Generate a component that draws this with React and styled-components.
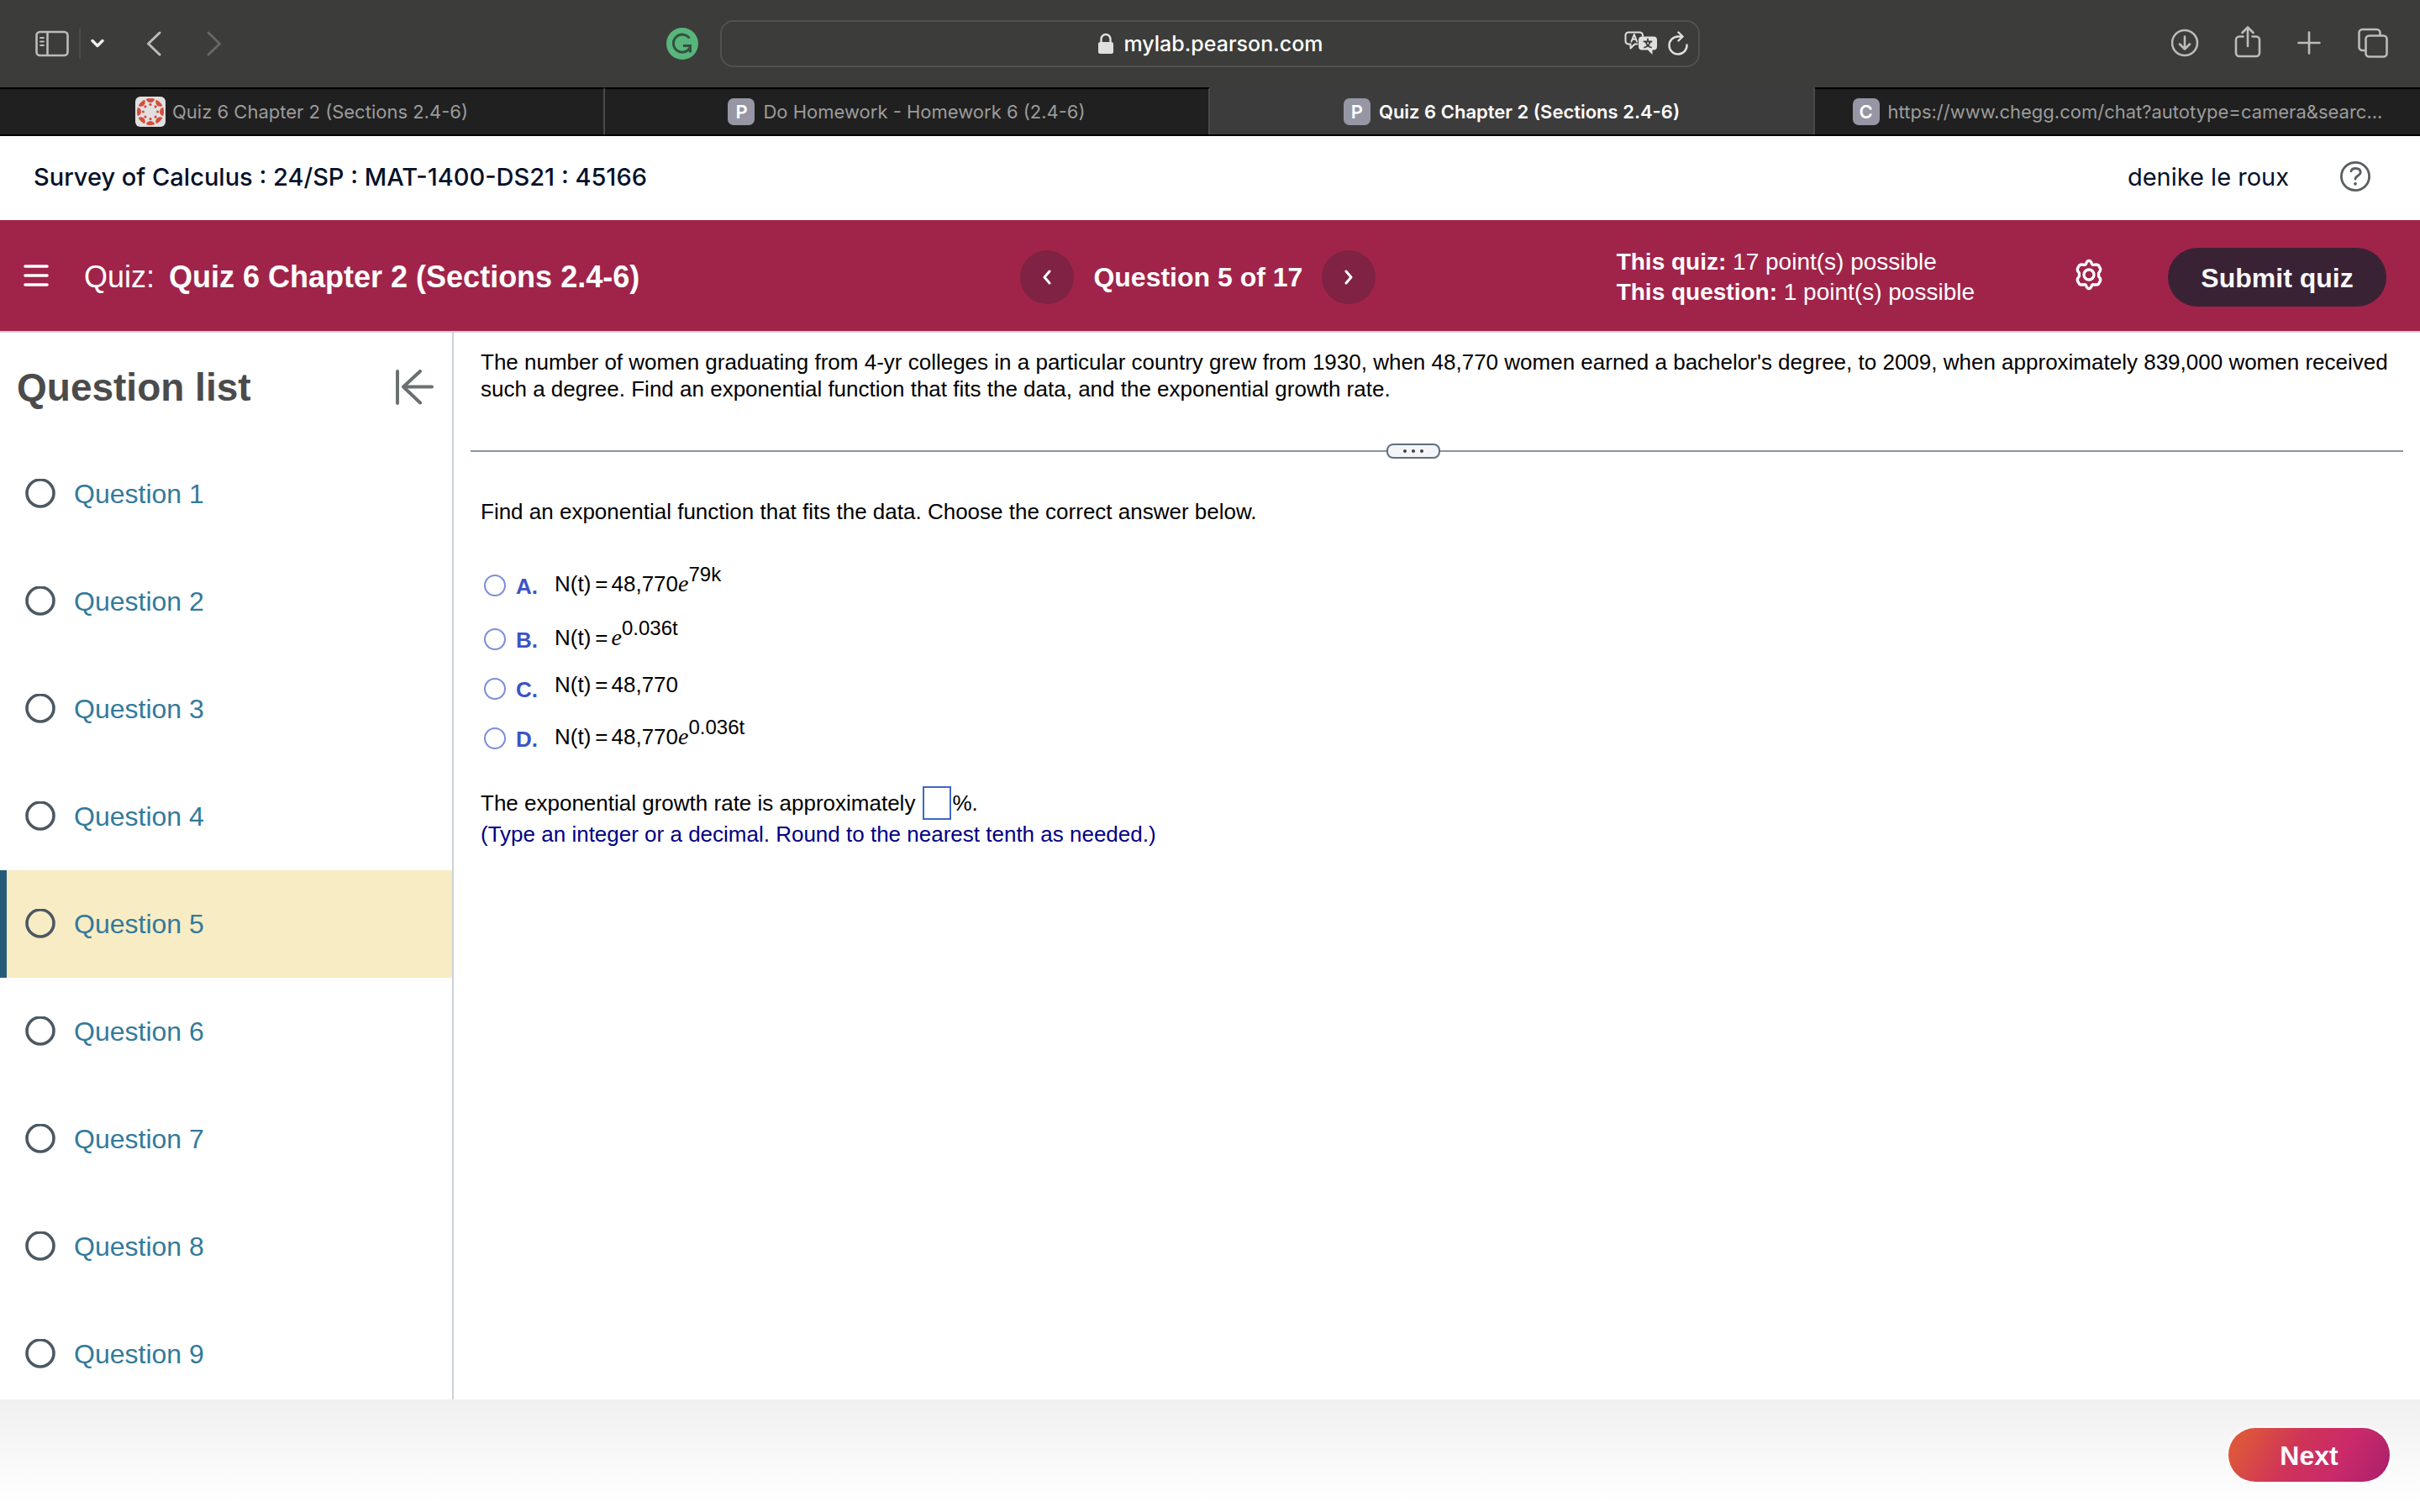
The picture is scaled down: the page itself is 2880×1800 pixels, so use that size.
import React, { useState } from 'react';
import styled, { createGlobalStyle } from 'styled-components';

const GlobalStyle = createGlobalStyle`
* {
    box-sizing: border-box;
}

body {
    margin: 0;
    background-color: #ffffff;
    font-family: "Liberation Sans", Arial, sans-serif;
    color: #000000;
}

button, input {
    font-family: inherit;
    margin: 0;
}
`;

const Page = styled.div`
display: flex;
flex-direction: column;
height: 100vh;
overflow: hidden;
`;

/* browser chrome */

const Toolbar = styled.div`
display: grid;
grid-template-columns: minmax(0, 1fr) minmax(0, 1166px) minmax(0, 1fr);
align-items: center;
flex-shrink: 0;
height: 104px;
background-color: #3c3c3a;
`;

const ToolbarLeft = styled.div`
display: flex;
align-items: center;
padding: 0 26px 0 42px;

.divider {
    width: 2px;
    height: 36px;
    margin: 0 12px;
    background-color: #4c4c4a;
}
.back {
    margin-left: 50px;
}
.forward {
    margin-left: 54px;
}
.grammarly {
    margin-left: auto;
}
`;

const ToolbarRight = styled.div`
display: flex;
align-items: center;
justify-content: flex-end;
gap: 40px;
padding-right: 36px;
`;

const IconButton = styled.button`
display: flex;
align-items: center;
justify-content: center;
padding: 0;
border: none;
background: none;
color: ${props => props.$color || '#bcbcba'};
cursor: pointer;

svg {
    display: block;
}
`;

const AddressBar = styled.div`
display: grid;
grid-template-columns: 1fr auto 1fr;
align-items: center;
height: 56px;
padding: 0 12px;
border: 2px solid #525250;
border-radius: 16px;
color: #ffffff;
font-family: Inter, sans-serif;
font-size: 25px;
font-weight: 500;

.address {
    display: flex;
    align-items: center;
    gap: 12px;
    grid-column: 2;
}
.actions {
    display: flex;
    align-items: center;
    justify-content: flex-end;
    gap: 12px;
}
`;

const TabBar = styled.div`
display: grid;
grid-template-columns: repeat(4, minmax(0, 1fr));
flex-shrink: 0;
height: 58px;
border-bottom: 2px solid #000000;
background-color: #202020;
`;

const Tab = styled.button`
display: flex;
align-items: center;
justify-content: center;
gap: ${props => props.$tight ? 8 : 10}px;
padding: 0 52px;
border: none;
border-top: 2px solid ${props => props.$active ? '#3c3c3c' : '#000000'};
border-right: 2px solid #4a4a4a;
background-color: ${props => props.$active ? '#3c3c3c' : '#202020'};
color: ${props => props.$active ? '#ffffff' : '#9c9c9c'};
font-family: Inter, sans-serif;
font-size: 22px;
font-weight: ${props => props.$active ? 600 : 400};
white-space: nowrap;

&:last-child {
    border-right: none;
}
`;

const Favicon = styled.span`
display: flex;
align-items: center;
justify-content: center;
flex-shrink: 0;
width: 32px;
height: 32px;
border-radius: 7px;
background-color: #9696a4;
color: #ffffff;
font-size: 22px;
font-weight: 600;
`;

/* course header */

const CourseHeader = styled.header`
display: flex;
align-items: center;
justify-content: space-between;
flex-shrink: 0;
height: 100px;
padding: 0 58px 4px 40px;
color: #05112a;
font-family: Inter, sans-serif;
font-size: 29px;

.course {
    margin: 0;
    font-size: 29px;
    font-weight: 500;
}
.user {
    display: flex;
    align-items: center;
    gap: 60px;
}
`;

const QuizBar = styled.div`
display: grid;
grid-template-columns: minmax(0, 43fr) auto minmax(0, 44fr);
align-items: center;
flex-shrink: 0;
height: 134px;
padding-top: 4px;
border-bottom: 2px solid #cbd0db;
background-color: #a0244a;
color: #ffffff;
`;

const QuizTitle = styled.div`
display: flex;
align-items: center;
padding: 0 28px;
font-size: 36px;
white-space: nowrap;

.name {
    margin: 0 0 0 17px;
    font-size: 36px;
    font-weight: bold;
}
.menu {
    margin: 0 42px 4px 0;
}
`;

const QuestionNav = styled.nav`
display: flex;
align-items: center;
gap: 23px;
font-size: 32px;
font-weight: bold;
white-space: nowrap;
`;

const RoundButton = styled.button`
display: flex;
align-items: center;
justify-content: center;
width: 64px;
height: 64px;
padding: 0;
border: none;
border-radius: 50%;
background-color: #7f2243;
color: #ffffff;
`;

const QuizInfo = styled.div`
display: flex;
align-items: center;
justify-content: flex-end;
padding-right: 40px;

.points {
    margin: 0;
    font-size: 28px;
    line-height: 36px;
    white-space: nowrap;
}
.settings {
    margin: 0 75px 6px 117px;
}
`;

const PillButton = styled.button`
height: ${props => props.$primary ? 64 : 70}px;
width: ${props => props.$primary ? 192 : 260}px;
padding: 2px 0 0;
border: none;
border-radius: 35px;
background: ${props => props.$primary
        ? 'linear-gradient(120deg, #dd563c 10%, #cf3359 42%, #ca2a6a 68%, #a91f6c 100%)'
        : '#3a2235'};
box-shadow: ${props => props.$primary ? '0 0 4px 2px rgba(255, 255, 255, 0.6)' : 'none'};
color: #f9f9ff;
font-size: 32px;
font-weight: bold;
`;

/* question list and question */

const Content = styled.div`
display: flex;
flex: 1;
min-height: 0;
`;

const Sidebar = styled.aside`
flex: 0 0 540px;
overflow: hidden;
border-right: 2px solid #cbd1da;
`;

const SidebarHeader = styled.div`
display: flex;
align-items: center;
justify-content: space-between;
height: 128px;
padding: 2px 20px 0;

h2 {
    margin: 0;
    color: #4b4b4b;
    font-size: 46px;
    font-weight: bold;
}
`;

const QuestionList = styled.ul`
margin: 0;
padding: 0;
list-style: none;
`;

const QuestionItem = styled.li`
height: 128px;
border-left: 8px solid ${props => props.$active ? '#265c7a' : 'transparent'};
background-color: ${props => props.$active ? '#f8ecc4' : 'transparent'};

a {
    display: flex;
    align-items: center;
    gap: 22px;
    height: 100%;
    padding-left: 22px;
    color: #337a9b;
    font-size: 32px;
    text-decoration: none;
}
`;

const Main = styled.main`
flex: 1;
min-width: 0;
padding: 19px 20px 0;
font-size: 26px;
line-height: 32px;

p {
    margin: 0;
    padding-left: 12px;
}
`;

const Divider = styled.div`
display: flex;
align-items: center;
height: 18px;
margin: 49px 0 47px;

.line {
    height: 2px;
    background-color: #8a94a5;
}
.start {
    flex: 1090;
}
.end {
    flex: 1146;
}
`;

const DividerHandle = styled.button`
display: flex;
align-items: center;
justify-content: center;
width: 64px;
height: 18px;
padding: 0;
border: 2px solid #5f6f80;
border-radius: 8px;
background-color: #f3f5f8;
color: #3a4450;
`;

const Choices = styled.fieldset`
display: flex;
flex-direction: column;
margin: 40px 0 0;
padding: 0 0 0 16px;
border: none;
`;

const Choice = styled.label`
display: flex;
align-items: center;
height: ${props => props.$plain ? 54 : 64}px;

input {
    appearance: none;
    width: 26px;
    height: 26px;
    border: 2px solid #7c8ddd;
    border-radius: 50%;
}
input:checked {
    background-color: #3c53c8;
}
.letter {
    width: 46px;
    margin-left: 12px;
    padding-top: 2px;
    color: #3c53c8;
    font-weight: bold;
}
.formula {
    padding-bottom: ${props => props.$plain ? 10 : 4}px;
    white-space: nowrap;
}
.equals {
    margin: 0 4px 0 5px;
}
.formula i {
    font-family: "Liberation Serif", serif;
    font-size: 28px;
    line-height: 0;
}
.formula sup {
    font-size: 24px;
    line-height: 0;
    vertical-align: 12px;
}
`;

const GrowthRate = styled.div`
display: flex;
align-items: center;
gap: 1px;
margin-top: 25px;
padding-left: 12px;

input {
    width: 34px;
    height: 40px;
    margin-left: 8px;
    padding: 0 4px;
    border: 2px solid #3f68c4;
    background-color: #ffffff;
    font-size: 24px;
}
`;

const Hint = styled.p`
padding-top: 1px;
color: #000084;
`;

const Footer = styled.footer`
display: flex;
justify-content: flex-end;
flex-shrink: 0;
height: 134px;
padding: 34px 36px 0;
background: linear-gradient(#f0f0f0, #ffffff 94%);
`;

const SidebarIcon = () => (
    <svg width="40" height="32" viewBox="0 0 40 32" fill="none" stroke="currentColor" strokeWidth="2.6">
        <rect x="1.5" y="2" width="37" height="28" rx="4" />
        <path d="M14.5 2v28" />
        <path d="M6 9h4M6 13.5h4M6 18h4" strokeWidth="1.8" strokeLinecap="round" />
    </svg>
);

const GrammarlyIcon = () => (
    <svg width="38" height="38" viewBox="0 0 38 38" fill="none">
        <circle cx="19" cy="19" r="19" fill="#58b57c" />
        <path d="M27.5 12.5A10.5 10.5 0 1 0 28.5 23" stroke="#34513f" strokeWidth="3" />
        <path d="M20 21.5h8.5v8" stroke="#34513f" strokeWidth="3" />
    </svg>
);

const LockIcon = () => (
    <svg width="20" height="26" viewBox="0 0 20 26" fill="none">
        <path d="M4.5 12V7.5a5.5 5.5 0 0 1 11 0V12" stroke="#e0e0de" strokeWidth="2.4" />
        <rect x="1" y="11" width="18" height="14" rx="2.5" fill="#e0e0de" />
    </svg>
);

const TranslateIcon = () => (
    <svg width="40" height="30" viewBox="0 0 40 30" fill="none" stroke="#e0e0de" strokeWidth="2" strokeLinecap="round" strokeLinejoin="round">
        <path d="M15.5 15.5h-3L7.500 20.500v-5H5a3.500 3.500 0 0 1-3.500-3.500V5A3.500 3.500 0 0 1 5 1.500h13.500A3.500 3.500 0 0 1 22 5v1" />
        <path d="M8.500 12.500l3.300-8.500 3.300 8.500M9.500 9.700h4.600" />
        <path d="M21 6.500h14a4 4 0 0 1 4 4v8a4 4 0 0 1-4 4h-1.500v5.500l-5.500-5.500h-7a4 4 0 0 1-4-4v-8a4 4 0 0 1 4-4z" fill="#e0e0de" stroke="none" />
        <path d="M28 9.500v2.500M23.500 12.500h9M31 12.500c-1 3.500-3.500 6-7 7M25.500 12.500c1 3.500 3 6 6.500 7" stroke="#3c3c3a" strokeWidth="1.800" />
    </svg>
);

const ReloadIcon = () => (
    <svg width="24" height="30" viewBox="0 0 24 30" fill="none" stroke="#e0e0de" strokeWidth="2.4" strokeLinecap="round" strokeLinejoin="round">
        <path d="M22.500 16.500A10.500 10.500 0 1 1 12 6.500h5" />
        <path d="M12.500 1.500l5 5-5 5" />
    </svg>
);

const DownloadIcon = () => (
    <svg width="34" height="38" viewBox="0 0 34 38" fill="none" stroke="currentColor" strokeWidth="2.6" strokeLinecap="round" strokeLinejoin="round">
        <circle cx="16" cy="18" r="15" />
        <path d="M16 10.5v15M10 19.5l6 6 6-6" />
    </svg>
);

const ShareIcon = () => (
    <svg width="34" height="42" viewBox="0 0 34 42" fill="none" stroke="currentColor" strokeWidth="2.6" strokeLinecap="round" strokeLinejoin="round">
        <path d="M11.500 12.500H7a4 4 0 0 0-4 4V32a4 4 0 0 0 4 4h20a4 4 0 0 0 4-4V16.500a4 4 0 0 0-4-4h-4.500" />
        <path d="M17 24V2.500M10.500 8L17 1.500 23.500 8" />
    </svg>
);

const PlusIcon = () => (
    <svg width="34" height="34" viewBox="0 0 34 34" stroke="currentColor" strokeWidth="2.6" strokeLinecap="round">
        <path d="M16 3.500v25M3.500 16h25" />
    </svg>
);

const TabsIcon = () => (
    <svg width="38" height="38" viewBox="0 0 38 38" fill="none" stroke="currentColor" strokeWidth="2.6">
        <rect x="9.5" y="9.5" width="25" height="25" rx="4" />
        <path d="M9.500 27H5.500a4 4 0 0 1-4-4V6a4 4 0 0 1 4-4h17a4 4 0 0 1 4 4v3.500" />
    </svg>
);

const Chevron = ({ d, width, height, stroke }) => (
    <svg width={width} height={height} viewBox={`0 0 ${width} ${height}`} fill="none" stroke="currentColor" strokeWidth={stroke} strokeLinecap="round" strokeLinejoin="round">
        <path d={d} />
    </svg>
);

const CanvasIcon = () => {
    const angles = [0, 45, 90, 135, 180, 225, 270, 315];
    return (
        <svg width="36" height="36" viewBox="0 0 36 36" fill="#d54d3b">
            <defs>
                <clipPath id="canvas-ring"><circle cx="18" cy="18" r="16" /></clipPath>
            </defs>
            <rect width="36" height="36" rx="6" fill="#e0e0e0" />
            <g clipPath="url(#canvas-ring)">
                {angles.map(angle => (
                    <circle key={angle} cx="18" cy="1.8" r="5.2" transform={`rotate(${angle} 18 18)`} />
                ))}
            </g>
            {angles.map(angle => (
                <circle key={angle} cx="18" cy="9.4" r="1.6" transform={`rotate(${angle} 18 18)`} />
            ))}
        </svg>
    );
};

const HelpIcon = () => (
    <svg width="38" height="38" viewBox="0 0 38 38" fill="none" stroke="#5a5f60" strokeWidth="2.8" strokeLinecap="round" strokeLinejoin="round">
        <circle cx="19" cy="19" r="16.6" />
        <path d="M14 12.800c.6-2.300 2.400-3.300 5.200-3.300 3.600 0 6 1.700 6 4.600 0 4.400-6.200 3.800-6.200 8.100" />
        <circle cx="19" cy="27.8" r="1.2" fill="#5a5f60" strokeWidth="1.4" />
    </svg>
);

const MenuIcon = () => (
    <svg width="30" height="30" viewBox="0 0 30 30" stroke="#ffffff" strokeWidth="3.6" strokeLinecap="round">
        <path d="M2 4h26M2 15h26M2 26h26" />
    </svg>
);

const GearIcon = () => (
    <svg width="38" height="38" viewBox="0 0 24 24" fill="none" stroke="#ffffff" strokeWidth="2.1" strokeLinejoin="round">
        <path d="M9.700 4.200C10.200 2.400 10.800 1.500 12 1.500s1.800.9 2.300 2.700l1 .5c1.900-.5 3-.4 3.900.3l1.300 2.200c.5 1.200.1 2.200-1.200 3.600v2.400c1.300 1.400 1.700 2.400 1.200 3.600L19.200 19c-.9.700-2 .8-3.900.3l-1 .5c-.5 1.800-1.100 2.700-2.300 2.700s-1.800-.9-2.300-2.700l-1-.5c-1.900.5-3 .4-3.900-.3l-1.300-2.200c-.5-1.200-.1-2.200 1.200-3.600v-2.400C3.400 9.400 3 8.400 3.500 7.200L4.800 5c.9-.7 2-.8 3.900-.3z" />
        <circle cx="12" cy="12" r="3.8" />
    </svg>
);

const CollapseIcon = () => (
    <svg width="48" height="42" viewBox="0 0 48 42" fill="none" stroke="#6a7070" strokeWidth="4" strokeLinecap="round" strokeLinejoin="round">
        <path d="M3 2v38M44 20.500H11M30 2L10 20.500l20 19" />
    </svg>
);

const StatusIcon = () => (
    <svg width="36" height="36" viewBox="0 0 36 36" fill="none" stroke="#4c5863" strokeWidth="3.6">
        <circle cx="18" cy="17" r="16" />
    </svg>
);

const DotsIcon = () => (
    <svg width="26" height="6" viewBox="0 0 26 6" fill="currentColor">
        <circle cx="3" cy="3" r="2" />
        <circle cx="13" cy="3" r="2" />
        <circle cx="23" cy="3" r="2" />
    </svg>
);

const tabs = [
    { title: 'Quiz 6 Chapter 2 (Sections 2.4-6)' },
    { title: 'Do Homework - Homework 6 (2.4-6)', letter: 'P' },
    { title: 'Quiz 6 Chapter 2 (Sections 2.4-6)', letter: 'P', active: true },
    { title: 'https://www.chegg.com/chat?autotype=camera&searc...', letter: 'C' },
];

const questions = [1, 2, 3, 4, 5, 6, 7, 8, 9];

const choices = [
    { letter: 'A', base: '48,770', exponent: '79k' },
    { letter: 'B', base: '', exponent: '0.036t' },
    { letter: 'C', base: '48,770' },
    { letter: 'D', base: '48,770', exponent: '0.036t' },
];

const BrowserBar = () => (
    <>
        <Toolbar>
            <ToolbarLeft>
                <IconButton aria-label="Sidebar"><SidebarIcon /></IconButton>
                <span className="divider" />
                <IconButton aria-label="Tab groups" $color="#f0f0ee">
                    <Chevron d="M2 2.500l6 6 6-6" width={16} height={12} stroke={3.4} />
                </IconButton>
                <IconButton className="back" aria-label="Back">
                    <Chevron d="M16 2L2.500 15 16 28" width={18} height={30} stroke={3} />
                </IconButton>
                <IconButton className="forward" aria-label="Forward" $color="#666664">
                    <Chevron d="M2 2l13.500 13L2 28" width={18} height={30} stroke={3} />
                </IconButton>
                <IconButton className="grammarly" aria-label="Grammarly"><GrammarlyIcon /></IconButton>
            </ToolbarLeft>
            <AddressBar>
                <div className="address">
                    <LockIcon />
                    <span>mylab.pearson.com</span>
                </div>
                <div className="actions">
                    <IconButton aria-label="Translate"><TranslateIcon /></IconButton>
                    <IconButton aria-label="Reload"><ReloadIcon /></IconButton>
                </div>
            </AddressBar>
            <ToolbarRight>
                <IconButton aria-label="Downloads"><DownloadIcon /></IconButton>
                <IconButton aria-label="Share"><ShareIcon /></IconButton>
                <IconButton aria-label="New tab"><PlusIcon /></IconButton>
                <IconButton aria-label="Tab overview"><TabsIcon /></IconButton>
            </ToolbarRight>
        </Toolbar>
        <TabBar>
            {tabs.map((tab, index) => (
                <Tab key={index} $active={tab.active} $tight={!tab.letter}>
                    {tab.letter ? <Favicon>{tab.letter}</Favicon> : <CanvasIcon />}
                    <span>{tab.title}</span>
                </Tab>
            ))}
        </TabBar>
    </>
);

const App = () => {
    const [choice, setChoice] = useState('');
    const [rate, setRate] = useState('');

    return (
        <Page>
            <GlobalStyle />
            <BrowserBar />
            <CourseHeader>
                <h1 className="course">Survey of Calculus : 24/SP : MAT-1400-DS21 : 45166</h1>
                <div className="user">
                    <span>denike le roux</span>
                    <IconButton aria-label="Help"><HelpIcon /></IconButton>
                </div>
            </CourseHeader>
            <QuizBar>
                <QuizTitle>
                    <IconButton className="menu" aria-label="Menu"><MenuIcon /></IconButton>
                    <span>Quiz:</span>
                    <h2 className="name">Quiz 6 Chapter 2 (Sections 2.4-6)</h2>
                </QuizTitle>
                <QuestionNav>
                    <RoundButton aria-label="Previous question">
                        <Chevron d="M9 2L3 9l6 7" width={12} height={18} stroke={3} />
                    </RoundButton>
                    <span>Question 5 of 17</span>
                    <RoundButton aria-label="Next question">
                        <Chevron d="M3 2l6 7-6 7" width={12} height={18} stroke={3} />
                    </RoundButton>
                </QuestionNav>
                <QuizInfo>
                    <p className="points">
                        <b>This quiz:</b> 17 point(s) possible<br />
                        <b>This question:</b> 1 point(s) possible
                    </p>
                    <IconButton className="settings" aria-label="Settings"><GearIcon /></IconButton>
                    <PillButton>Submit quiz</PillButton>
                </QuizInfo>
            </QuizBar>
            <Content>
                <Sidebar>
                    <SidebarHeader>
                        <h2>Question list</h2>
                        <IconButton aria-label="Collapse question list"><CollapseIcon /></IconButton>
                    </SidebarHeader>
                    <QuestionList>
                        {questions.map(number => (
                            <QuestionItem key={number} $active={number === 5}>
                                <a href={`#question-${number}`}>
                                    <StatusIcon />
                                    Question {number}
                                </a>
                            </QuestionItem>
                        ))}
                    </QuestionList>
                </Sidebar>
                <Main>
                    <p>
                        The number of women graduating from 4-yr colleges in a particular country grew from 1930, when 48,770 women earned a bachelor's degree, to 2009, when approximately 839,000 women received such a degree. Find an exponential function that fits the data, and the exponential growth rate.
                    </p>
                    <Divider>
                        <div className="line start" />
                        <DividerHandle aria-label="Resize"><DotsIcon /></DividerHandle>
                        <div className="line end" />
                    </Divider>
                    <p>Find an exponential function that fits the data. Choose the correct answer below.</p>
                    <Choices>
                        {choices.map(({ letter, base, exponent }) => (
                            <Choice key={letter} $plain={!exponent}>
                                <input
                                    type="radio"
                                    name="answer"
                                    value={letter}
                                    checked={choice === letter}
                                    onChange={() => setChoice(letter)}
                                />
                                <span className="letter">{letter}.</span>
                                <span className="formula">
                                    N(t)<span className="equals">=</span>{base}
                                    {exponent && <><i>e</i><sup>{exponent}</sup></>}
                                </span>
                            </Choice>
                        ))}
                    </Choices>
                    <GrowthRate>
                        <label htmlFor="rate">The exponential growth rate is approximately</label>
                        <input id="rate" type="text" value={rate} onChange={e => setRate(e.target.value)} />
                        <span>%.</span>
                    </GrowthRate>
                    <Hint>(Type an integer or a decimal. Round to the nearest tenth as needed.)</Hint>
                </Main>
            </Content>
            <Footer>
                <PillButton $primary>Next</PillButton>
            </Footer>
        </Page>
    )
}

export default App;
